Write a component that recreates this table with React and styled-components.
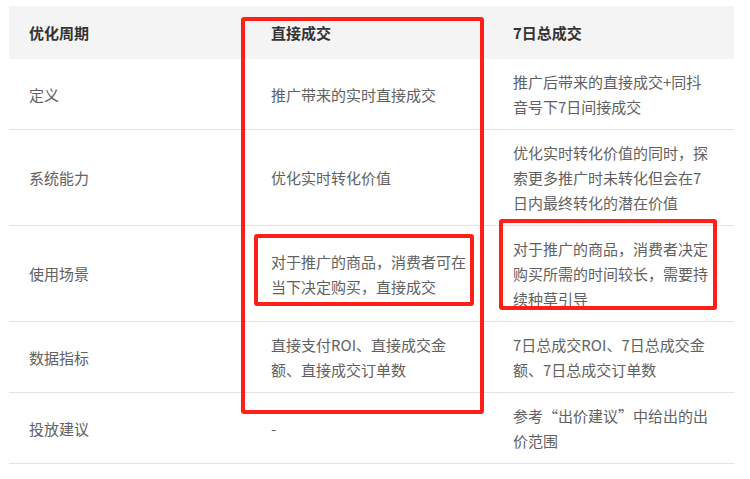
import React from "react";
import styled, { createGlobalStyle } from "styled-components";

const GlobalStyle = createGlobalStyle`
  html, body { margin: 0; padding: 0; background: #fff; }
  body { font-family: "Noto Sans CJK SC", "Noto Sans", sans-serif; }
`;

const Page = styled.div`
  padding: 6px 16px 0 9px;
`;

const Frame = styled.div`
  position: relative;
  width: 725px;
`;

const Table = styled.table`
  width: 725px;
  table-layout: fixed;
  border-collapse: collapse;
  font-size: 15px;
  line-height: 25px;
`;

const HeadCell = styled.th`
  background: #f4f4f4;
  color: #333;
  font-weight: 700;
  text-align: left;
  padding: 14px 20px;
  vertical-align: middle;
`;

const Row = styled.tr`
  border-bottom: 1px solid #e2e2e2;
`;

const Cell = styled.td`
  color: #616161;
  padding: 10px 20px;
  vertical-align: middle;
  word-break: break-all;
`;

const Mark = styled.div`
  position: absolute;
  left: ${(p) => p.$x}px;
  top: ${(p) => p.$y}px;
  width: ${(p) => p.$w}px;
  height: ${(p) => p.$h}px;
  box-sizing: border-box;
  border: 4px solid #ff1f17;
  border-radius: 3px;
  pointer-events: none;
`;

const rows = [
  ["定义", "推广带来的实时直接成交", "推广后带来的直接成交+同抖音号下7日间接成交"],
  ["系统能力", "优化实时转化价值", "优化实时转化价值的同时，探索更多推广时未转化但会在7日内最终转化的潜在价值"],
  ["使用场景", "对于推广的商品，消费者可在当下决定购买，直接成交", "对于推广的商品，消费者决定购买所需的时间较长，需要持续种草引导"],
  ["数据指标", "直接支付ROI、直接成交金额、直接成交订单数", "7日总成交ROI、7日总成交金额、7日总成交订单数"],
  ["投放建议", "-", "参考“出价建议”中给出的出价范围"],
];

export default function App() {
  return (
    <>
      <GlobalStyle />
      <Page>
        <Frame>
          <Table>
            <colgroup>
              <col style={{ width: 242 }} />
              <col style={{ width: 242 }} />
              <col style={{ width: 241 }} />
            </colgroup>
            <thead>
              <tr>
                <HeadCell>优化周期</HeadCell>
                <HeadCell>直接成交</HeadCell>
                <HeadCell>7日总成交</HeadCell>
              </tr>
            </thead>
            <tbody>
              {rows.map((r) => (
                <Row key={r[0]}>
                  <Cell>{r[0]}</Cell>
                  <Cell>{r[1]}</Cell>
                  <Cell>{r[2]}</Cell>
                </Row>
              ))}
            </tbody>
          </Table>
          <Mark $x={232} $y={11} $w={243} $h={397} />
          <Mark $x={245} $y={228} $w={220} $h={72} />
          <Mark $x={490} $y={213} $w={218} $h={91} />
        </Frame>
      </Page>
    </>
  );
}
